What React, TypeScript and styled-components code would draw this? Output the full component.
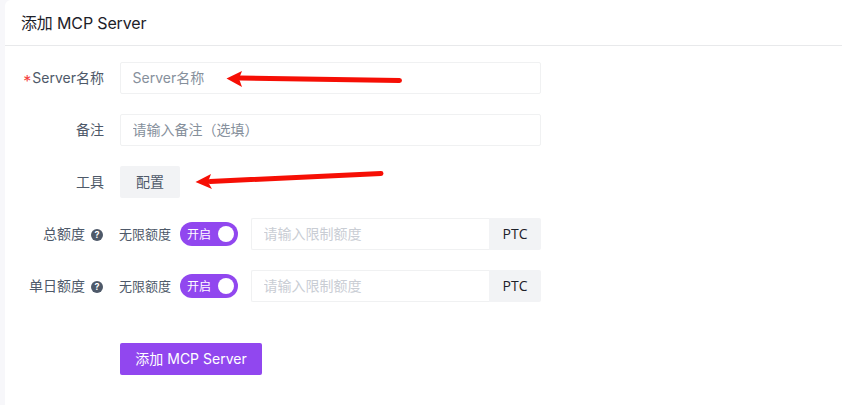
import styled, { createGlobalStyle } from "styled-components";

const GlobalStyle = createGlobalStyle`
  html, body {
    margin: 0;
    height: 100%;
    overflow: hidden;
    background-color: #f7f7fa;
  }
  body {
    font-family: Inter, "Noto Sans CJK SC", sans-serif;
    font-size: 14px;
    color: #4e5969;
  }
`;

const Card = styled.div`
  position: relative;
  margin-left: 5px;
  height: 405px;
  box-sizing: border-box;
  background-color: #fff;
  border-top-left-radius: 6px;
`;

const CardHeader = styled.div`
  height: 46px;
  box-sizing: border-box;
  padding: 0 16px 1px;
  display: flex;
  align-items: center;
  font-size: 16px;
  letter-spacing: -0.15px;
  color: #1d2129;
  border-bottom: 1px solid #e8e9eb;
`;

const Form = styled.div`
  display: flex;
  flex-direction: column;
  gap: 20px;
  padding-top: 16px;
`;

const Row = styled.div`
  display: flex;
  align-items: center;
  height: 32px;
`;

const Label = styled.div`
  width: 99px;
  flex-shrink: 0;
  margin-right: 16px;
  padding-bottom: 2px;
  display: flex;
  align-items: center;
  justify-content: flex-end;
  white-space: nowrap;
  color: #4e5969;
`;

const Star = styled.span`
  color: #f53f3f;
  margin-right: 1px;
  font-size: 16px;
  position: relative;
  top: 4px;
`;

const Input = styled.input`
  width: 421px;
  height: 32px;
  box-sizing: border-box;
  padding: 0 12px 2px 11.5px;
  border: 1px solid #f0f1f2;
  border-radius: 2px;
  background: #fff;
  font: inherit;
  outline: none;

  &::placeholder {
    color: ${(p: { $muted?: boolean }) => (p.$muted ? "#c9cdd4" : "#86909c")};
  }
`;

const GhostButton = styled.button`
  width: 60px;
  height: 32px;
  padding: 0 0 2px;
  border: none;
  border-radius: 2px;
  background-color: #f2f3f5;
  color: #4e5969;
  font: inherit;
`;

const HelpDot = styled.span`
  width: 12px;
  height: 12px;
  margin-left: 6px;
  margin-right: 1px;
  margin-top: 3px;
  border-radius: 50%;
  background-color: #4e5969;
  color: #fff;
  font-size: 9px;
  font-weight: 700;
  line-height: 12px;
  text-align: center;
`;

const Hint = styled.span`
  white-space: nowrap;
  width: 52px;
  margin-left: -1px;
  margin-right: 9px;
  padding-bottom: 2px;
  font-size: 13px;
`;

const Switch = styled.div`
  width: 58px;
  height: 24px;
  box-sizing: border-box;
  padding: 0 3px 1px 7px;
  margin-right: 13px;
  border-radius: 12px;
  background-color: #9147ef;
  color: #fff;
  font-size: 12px;
  display: flex;
  align-items: center;
  justify-content: space-between;
  flex-shrink: 0;
`;

const Knob = styled.span`
  width: 16px;
  height: 16px;
  margin-right: 1px;
  margin-top: 1px;
  border-radius: 50%;
  background-color: #fff;
`;

const QuotaGroup = styled.div`
  display: flex;
  width: 290px;
  height: 32px;
`;

const QuotaInput = styled(Input)`
  flex: 1;
  width: auto;
  min-width: 0;
  border-right: none;
  border-radius: 2px 0 0 2px;
`;

const Addon = styled.div`
  width: 52px;
  padding-bottom: 1px;
  box-sizing: border-box;
  display: flex;
  align-items: center;
  justify-content: center;
  background-color: #f2f3f5;
  color: #1d2129;
  font-family: "Open Sans", sans-serif;
  border-radius: 0 2px 2px 0;
`;

const SubmitRow = styled.div`
  padding: 41px 0 0 115px;
`;

const SubmitButton = styled.button`
  width: 142px;
  height: 32px;
  padding: 0 0 2px;
  border: none;
  border-radius: 2px;
  background-color: #9147ef;
  color: #fff;
  font: inherit;
`;

const Marker = styled.svg`
  position: absolute;
  left: -5px;
  top: 0;
  pointer-events: none;
`;

const quotaRows = ["总额度", "单日额度"];

export default function App() {
  return (
    <>
      <GlobalStyle />
      <Card>
        <CardHeader>添加 MCP Server</CardHeader>
        <Form>
          <Row>
            <Label>
              <Star>*</Star>Server名称
            </Label>
            <Input placeholder="Server名称" />
          </Row>
          <Row>
            <Label>备注</Label>
            <Input placeholder="请输入备注（选填）" />
          </Row>
          <Row>
            <Label>工具</Label>
            <GhostButton>配置</GhostButton>
          </Row>
          {quotaRows.map((name) => (
            <Row key={name}>
              <Label>
                {name}
                <HelpDot>?</HelpDot>
              </Label>
              <Hint>无限额度</Hint>
              <Switch>
                开启
                <Knob />
              </Switch>
              <QuotaGroup>
                <QuotaInput $muted placeholder="请输入限制额度" />
                <Addon>PTC</Addon>
              </QuotaGroup>
            </Row>
          ))}
        </Form>
        <SubmitRow>
          <SubmitButton>添加 MCP Server</SubmitButton>
        </SubmitRow>
        <Marker width="420" height="200" viewBox="0 0 420 200">
          <path d="M399.5 80.5 L240 78" stroke="#f60f05" strokeWidth="5" strokeLinecap="round" fill="none" />
          <path d="M226.5 78.5 L242 71 L239 78.5 L242 87 Z" fill="#f60f05" />
          <path d="M381 173.5 L210 181.5" stroke="#f60f05" strokeWidth="5" strokeLinecap="round" fill="none" />
          <path d="M195.5 182 L211 174 L208 182 L212 189 Z" fill="#f60f05" />
        </Marker>
      </Card>
    </>
  );
}
